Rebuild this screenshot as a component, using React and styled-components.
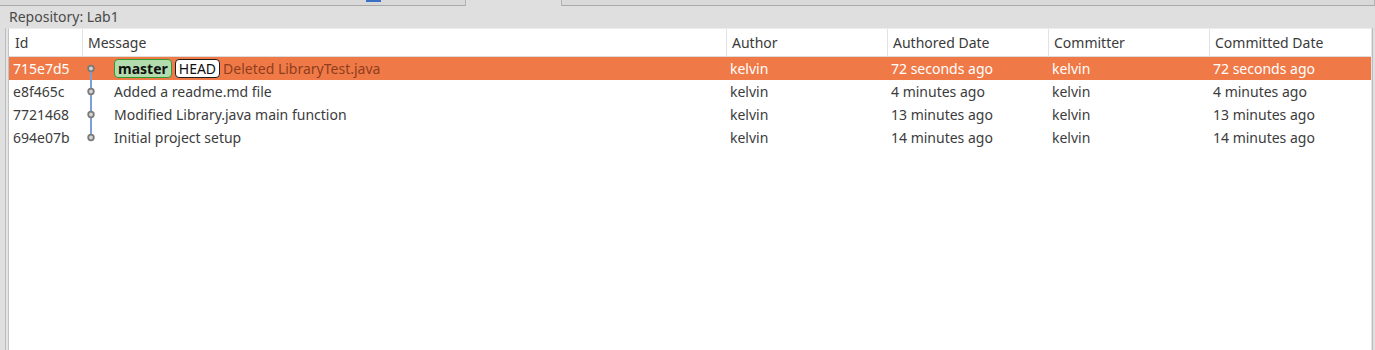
import React from 'react'
import styled, { createGlobalStyle } from 'styled-components'

const GlobalStyle = createGlobalStyle`
html,body{margin:0;padding:0;}
body{
  width:1375px;
  height:350px;
  overflow:hidden;
  background:#dfdfdf;
  font-family:"Noto Sans","Open Sans",sans-serif;
  color:#3c3c3c;
}
`;

const Page = styled.div`
display:flex;
flex-direction:column;
height:350px;
`;

const TabStrip = styled.div`
display:flex;
height:6px;
background:#d8d8d8;
`;

const Tab = styled.div`
box-sizing:border-box;
height:6px;
width:${p => p.w ? p.w + 'px' : 'auto'};
flex:${p => p.w ? 'none' : 1};
background:${p => p.active ? '#dfdfdf' : '#d9d9d9'};
border-bottom:${p => p.active ? 'none' : '1px solid #a9a9a9'};
border-right:1px solid #b4b4b4;
display:flex;
align-items:flex-start;
`;

const TabIcon = styled.span`
margin-left:${p => p.at}px;
width:15px;
height:2px;
background:#3a6fc4;
`;

const RepoLabel = styled.div`
height:22px;
padding-left:9px;
font-size:14px;
line-height:21px;
color:#4a4a4a;
`;

const Frame = styled.div`
flex:1;
margin-left:5px;
margin-right:2px;
border-left:1px solid #bdbdbd;
border-right:1px solid #bdbdbd;
padding:0 1px 0 2px;
background:#e4e4e4;
display:flex;
`;

const Table = styled.div`
flex:1;
background:#fff;
border-left:1px solid #c2c2c2;
border-top:1px solid #ececec;
display:grid;
grid-template-columns:73px 644px 161px 161px 161px 1fr;
grid-template-rows:28px;
grid-auto-rows:23px;
align-content:start;
font-size:14px;
`;

const HeadCell = styled.div`
box-sizing:border-box;
padding-left:${p => p.first ? 6 : 5}px;
border-left:${p => p.first ? 'none' : '1px solid #e2e2e2'};
border-bottom:1px solid #dcdcdc;
display:flex;
align-items:center;
color:#3a3a3a;
background:#fff;
`;

const Row = styled.div`
display:contents;
& > div{
  background:${p => p.selected ? '#f07a47' : '#fff'};
  color:${p => p.selected ? '#ffffff' : '#3c3c3c'};
}
`;

const Cell = styled.div`
display:flex;
align-items:center;
padding-left:${p => p.first ? 4 : 4}px;
white-space:nowrap;
overflow:hidden;
`;

const MsgCell = styled.div`
display:flex;
align-items:center;
white-space:nowrap;
overflow:hidden;
`;

const Graph = styled.svg`
width:32px;
height:23px;
flex:none;
`;

const Badge = styled.span`
box-sizing:border-box;
height:19px;
display:inline-flex;
align-items:center;
padding:0 3px;
margin-right:3px;
border-radius:4px;
border:1px solid ${p => p.branch ? '#2f9a2f' : '#1e1e1e'};
background:${p => p.branch ? '#b3dcae' : '#ffffff'};
color:#111;
font-weight:${p => p.branch ? 700 : 400};
`;

const MsgText = styled.span`
color:${p => p.selected ? '#8f3d1d' : 'inherit'};
`;

const commits = [
  { id: '715e7d5', msg: 'Deleted LibraryTest.java', author: 'kelvin', date: '72 seconds ago', refs: true },
  { id: 'e8f465c', msg: 'Added a readme.md file', author: 'kelvin', date: '4 minutes ago' },
  { id: '7721468', msg: 'Modified Library.java main function', author: 'kelvin', date: '13 minutes ago' },
  { id: '694e07b', msg: 'Initial project setup', author: 'kelvin', date: '14 minutes ago' },
]

const Node = ({ top, bottom }) => (
  <Graph viewBox="0 0 32 23">
    {top && <line x1="9" y1="0" x2="9" y2="11.5" stroke="#7c9fd6" strokeWidth="2" />}
    {bottom && <line x1="9" y1="11.5" x2="9" y2="23" stroke="#7c9fd6" strokeWidth="2" />}
    <circle cx="9" cy="11.5" r="2.8" fill="#d4d4d4" stroke="#7a7a7a" strokeWidth="1.8" />
  </Graph>
)

const App = () => {
  const heads = ['Message', 'Author', 'Authored Date', 'Committer', 'Committed Date']
  return (
    <>
      <GlobalStyle />
      <Page>
        <TabStrip>
          <Tab w={466}><TabIcon at={366} /></Tab>
          <Tab w={96} active />
          <Tab />
        </TabStrip>
        <RepoLabel>Repository: Lab1</RepoLabel>
        <Frame>
          <Table>
            <HeadCell first>Id</HeadCell>
            {heads.map(h => <HeadCell key={h}>{h}</HeadCell>)}
            {commits.map((c, i) => (
              <Row key={c.id} selected={i === 0}>
                <Cell first>{c.id}</Cell>
                <MsgCell>
                  <Node top={i > 0} bottom={i < commits.length - 1} />
                  {c.refs && <Badge branch>master</Badge>}
                  {c.refs && <Badge>HEAD</Badge>}
                  <MsgText selected={i === 0}>{c.msg}</MsgText>
                </MsgCell>
                <Cell>{c.author}</Cell>
                <Cell>{c.date}</Cell>
                <Cell>{c.author}</Cell>
                <Cell>{c.date}</Cell>
              </Row>
            ))}
          </Table>
        </Frame>
      </Page>
    </>
  )
}

export default App
